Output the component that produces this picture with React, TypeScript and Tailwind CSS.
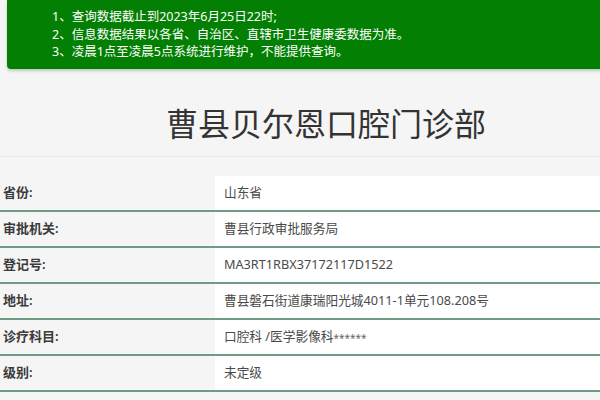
import React from "react";

const notices = [
  "1、查询数据截止到2023年6月25日22时;",
  "2、信息数据结果以各省、自治区、直辖市卫生健康委数据为准。",
  "3、凌晨1点至凌晨5点系统进行维护，不能提供查询。",
];

const rows: { label: string; value: React.ReactNode }[] = [
  { label: "省份:", value: "山东省" },
  { label: "审批机关:", value: "曹县行政审批服务局" },
  { label: "登记号:", value: "MA3RT1RBX37172117D1522" },
  { label: "地址:", value: "曹县磐石街道康瑞阳光城4011-1单元108.208号" },
  {
    label: "诊疗科目:",
    value: (
      <>
        口腔科 /医学影像科
        <span className="text-[10px] self-start mt-[11px] text-[#666]">******</span>
      </>
    ),
  },
  { label: "级别:", value: "未定级" },
];

export default function App() {
  return (
    <div
      className="w-[600px] h-[400px] overflow-hidden bg-[#f5f5f5] text-[#333]"
      style={{ fontFamily: '"Noto Sans", "Noto Sans CJK SC", sans-serif' }}
    >
      <div className="ml-[7px] w-[620px] h-[69px] bg-[#038003] rounded-bl-[4px] shadow-[0_2px_3px_rgba(0,100,0,0.25)] pt-[8px] pl-[45px]">
        {notices.map((n) => (
          <div key={n} className="text-white text-[12.5px] leading-[17.5px]">
            {n}
          </div>
        ))}
      </div>

      <div className="h-[88px] border-b border-[#e9e9e9] flex items-center justify-center pl-[52px] pt-[22px]">
        <h1 className="text-[32px] leading-none font-normal text-[#333]">
          曹县贝尔恩口腔门诊部
        </h1>
      </div>

      <div className="mt-[19px]">
        {rows.map((r) => (
          <div key={r.label} className="flex h-[36px] border-b-2 border-[#6f9c82]">
            <div className="w-[215px] flex items-center pl-[3px] text-[13px] font-semibold text-[#3a3a3a]">
              {r.label}
            </div>
            <div className="flex-1 bg-white flex items-center pl-[9px] text-[12.7px] text-[#4a4a4a]">
              {r.value}
            </div>
          </div>
        ))}
      </div>
    </div>
  );
}
